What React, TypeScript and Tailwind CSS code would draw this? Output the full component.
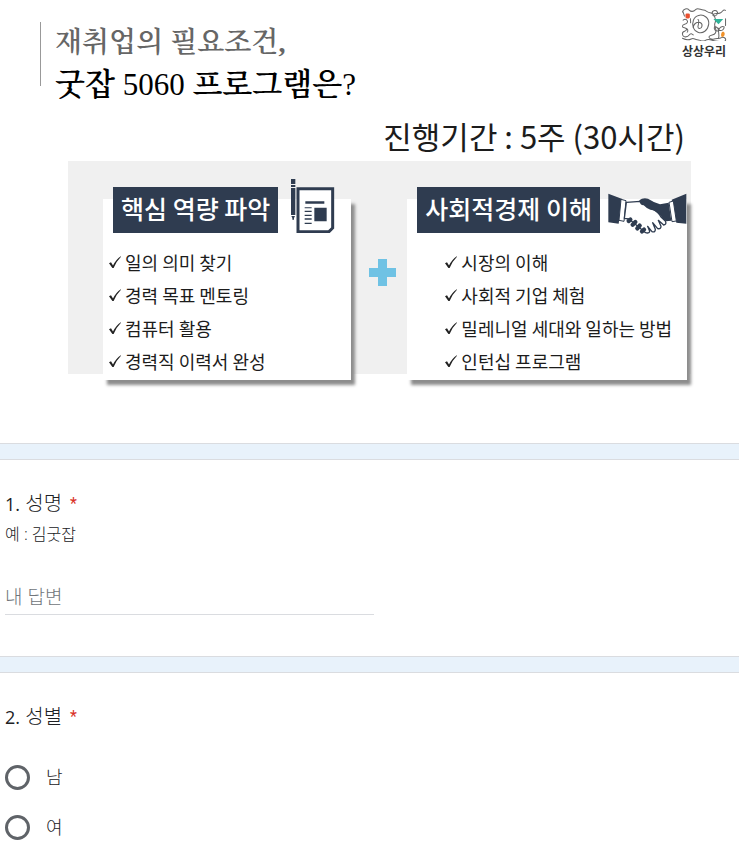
import type { ReactNode } from "react";

const sans = "font-['Noto_Sans_CJK_KR',sans-serif]";
const form = "font-['Open_Sans','Noto_Sans_CJK_KR',sans-serif]";
const serif = "font-['Liberation_Serif','Noto_Serif_CJK_KR','Noto_Sans_CJK_KR',serif]";

function Logo() {
  return (
    <div className="flex flex-col items-center pt-2 pr-3">
      <svg viewBox="17 12 134 98" className="h-[33px] w-[46px]" fill="none" stroke="#666" strokeWidth="3" strokeLinecap="round" aria-hidden="true">
        <path d="M20 24c2-10 14-12 20-6s14 4 20-2 14 2 22 2 12 8 20 8 14 10 16 20-4 10-2 18 6 14 2 22-14 4-18 10 6 10 14 8 16 0 22-4 14 2 12 8-18 4-30 2-20-8-30-2-16-2-24-2-10-6-18-2-18 2-26-2" />
        <path d="M52 70c-4-14 0-32 16-36s32 8 30 26-18 30-32 24-18-18-8-26 22-2 20 8-12 8-12 2 6-18 0-22" />
        <path d="M108 28c0-10 14-12 16-3s-10 14-14 8c4-8 14-2 22-6s8-12 16-8M22 48c8-6 16 2 12 8s-14 2-14 10 12 2 12 10-14 2-12 14 16 8 20 2 8-4 12 0M30 72c6 2 8 8 4 12" />
        <path d="M127 102c4-12-2-20 0-30M127 80c-10 2-14-6-12-12 8 0 12 4 12 12zM128 78c2-10 10-12 16-10 0 8-6 12-16 10zM148 44v20M22 24l4 12M44 44c-2 6 2 8 0 12" />
        <rect x="29" y="28" width="13" height="15" rx="4" fill="#e8502f" stroke="none" />
        <path d="M112 45h29l-14 15z" fill="#2eb398" stroke="none" />
        <path d="M137 84c8-5 11 6 6 12s-12 0-6-12z" fill="#f0922b" stroke="none" />
      </svg>
      <span className="text-[12px] leading-[20px] font-bold text-[#333]">상상우리</span>
    </div>
  );
}

function DocumentIcon() {
  return (
    <svg viewBox="30 27 135 162" className="h-[54px] w-[45px] shrink-0" fill="#2f3c50" aria-hidden="true">
      <path d="M33 27h13v15H33zM33 45h13v6H33zM33 54h13v81H33zM34 138h11l-3 6v5h-5v-5z" />
      <path d="M54 56h104v118l-11 11H54z" fill="#fff" stroke="#2f3c50" strokeWidth="9" />
      <path d="M76 94h57v7H76zM103 113h37v41h-37zM74 112h21v3H74zM74 122h21v4H74zM74 134h21v4H74zM74 145h21v4H74zM74 158h21v4H74z" />
    </svg>
  );
}

function HandshakeIcon() {
  return (
    <svg viewBox="21 42 237 126" className="-mb-0.5 h-[42px] w-[79px] shrink-0" fill="#2f3c50" aria-hidden="true">
      <path d="M22 44l42 16-11 74-31-4zM256 44l-44 18 14 69 30 3z" />
      <path d="M60 61l15 4-6 62-15-3zM217 66l-13 4 9 58 13-2z" fill="#fff" stroke="#2f3c50" strokeWidth="3" />
      <path d="M76 70l42-3q16 10 34 21 22 12 28 26l13 12q5 10-5 12l-16-14 8 18q0 9-10 7l-15-18 8 20q0 10-10 7l-13-16 6 15q-2 8-14 3l-48-40-14-2z" fill="#fff" stroke="#2f3c50" strokeWidth="4" strokeLinejoin="round" />
      <path d="M115 64q10-9 26-5 17 11 36 17l26-5 8 54-16 2q-10-6-18-19-12-15-29-16-12-4-20-13-12 0-13-15z" />
      <g stroke="#2f3c50" strokeWidth="13" strokeLinecap="round">
        <path d="M83 126l5-4M95 137l8-8M109 148l7-8M123 157l6-5" />
      </g>
    </svg>
  );
}

function Check() {
  return (
    <svg viewBox="0 0 12 13" className="h-[13px] w-3 shrink-0" aria-hidden="true">
      <path d="M0 7.2l2-1 2 3.4Q7 3.500 11.800 0.300L12 .7Q7.500 5 4.600 12H3.400z" fill="#222" />
    </svg>
  );
}

type ProgramCardProps = { title: string; items: string[]; icon: ReactNode; headClass: string; listClass: string };

function ProgramCard({ title, items, icon, headClass, listClass }: ProgramCardProps) {
  return (
    <article className="bg-white pb-0.5 shadow-[4px_5px_3px_#8d8d8d]">
      <div className={`-mt-3 ml-2.5 flex h-[46px] items-end ${headClass}`}>
        <h3 className="flex h-[46px] items-center bg-[#2f3c50] px-2 pb-1 text-[25px] leading-none font-medium whitespace-nowrap text-white">{title}</h3>
        {icon}
      </div>
      <ul className={`mt-[13px] ${listClass}`}>
        {items.map((item) => (
          <li key={item} className="flex h-[33px] items-center gap-1 text-[18px] whitespace-nowrap text-[#1c1c1c]">
            <Check />
            {item}
          </li>
        ))}
      </ul>
    </article>
  );
}

function Banner() {
  return (
    <section className="border-b border-[#dadce0] bg-white pb-[69px]">
      <div className="flex items-start justify-between">
        <div className="flex gap-[14px] pl-10">
          <div className="mt-[22px] h-16 w-px bg-[#999]" />
          <h1 className={`mt-[22px] leading-[42px] whitespace-nowrap ${serif}`}>
            <span className="block text-[28px] font-semibold text-[#666]">재취업의 필요조건,</span>
            <span className="block text-[31px] font-semibold text-black">
              굿잡 <span className="font-normal">5060</span> 프로그램은<span className="font-normal">?</span>
            </span>
          </h1>
        </div>
        <Logo />
      </div>
      <p className="mt-[10px] pr-[54px] text-right text-[31px] leading-10 text-[#1c1c1c]">진행기간 : 5주 (30시간)</p>
      <div className="mt-[5px] mr-12 ml-[68px] grid grid-cols-[249fr_56px_279fr] bg-[#f0f0f0] pt-[38px] pr-1 pl-[35px] *:-mb-1.5">
        <ProgramCard
          title="핵심 역량 파악"
          items={["일의 의미 찾기", "경력 목표 멘토링", "컴퓨터 활용", "경력직 이력서 완성"]}
          icon={<DocumentIcon />}
          headClass="gap-3"
          listClass="pl-1.5"
        />
        <svg viewBox="0 0 27 27" className="mt-[60px] ml-[18px] size-[27px]" fill="#6fc2e4" aria-hidden="true">
          <path d="M9 0h9v9h9v9h-9v9H9v-9H0V9h9z" />
        </svg>
        <ProgramCard
          title="사회적경제 이해"
          items={["시장의 이해", "사회적 기업 체험", "밀레니얼 세대와 일하는 방법", "인턴십 프로그램"]}
          icon={<HandshakeIcon />}
          headClass="gap-2"
          listClass="pl-[38px]"
        />
      </div>
    </section>
  );
}

function Required() {
  return <span className="ml-2 font-['Roboto',sans-serif] text-[16px] leading-none font-normal text-[#d93025]">*</span>;
}

export default function App() {
  return (
    <main className={`flex min-h-screen flex-col gap-[15px] overflow-x-hidden bg-[#e8f2fb] text-[#202124] ${sans}`}>
      <Banner />
      <section className={`border-y border-[#dadce0] bg-white px-[5px] pt-[30px] pb-[41px] ${form}`}>
        <label htmlFor="name" className="flex h-7 items-center text-[20px] leading-7 font-light">
          <span><span className="text-[18px] font-normal">1.</span> 성명</span>
          <Required />
        </label>
        <p id="name-hint" className="mt-1 h-6 text-[16px] leading-6 font-light">예 : 김굿잡</p>
        <input
          id="name"
          type="text"
          required
          aria-describedby="name-hint"
          placeholder="내 답변"
          className="mt-[37px] block h-8 w-[369px] max-w-full border-b border-[#dadce0] pb-1 text-[19px] font-light outline-none placeholder:text-[#70757a]"
        />
      </section>
      <section className={`grow border-t border-[#dadce0] bg-white px-[5px] pt-[30px] ${form}`}>
        <fieldset>
          <legend className="flex h-7 items-center text-[20px] leading-7 font-light">
            <span><span className="text-[18px] font-normal">2.</span> 성별</span>
            <Required />
          </legend>
          <div className="mt-8 flex flex-col gap-[22px]">
            {["남", "여"].map((option) => (
              <label key={option} className="flex h-7 items-center gap-4 text-[18px] leading-7 font-light">
                <input type="radio" name="gender" value={option} className="size-[25px] appearance-none rounded-full border-3 border-[#5f6368] checked:border-8" />
                {option}
              </label>
            ))}
          </div>
        </fieldset>
      </section>
    </main>
  );
}
